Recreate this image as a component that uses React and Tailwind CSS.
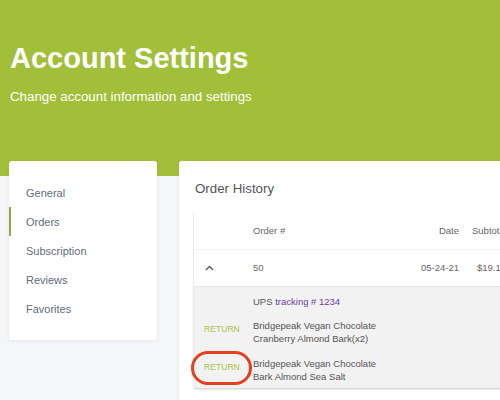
import React from 'react';

const menu = ['General', 'Orders', 'Subscription', 'Reviews', 'Favorites'];

const items = [
  { name: ['Bridgepeak Vegan Chocolate', 'Cranberry Almond Bark(x2)'], marked: false },
  { name: ['Bridgepeak Vegan Chocolate', 'Bark Almond Sea Salt'], marked: true }
];

const ChevronUp = () => (
  <svg width="9" height="6" viewBox="0 0 9 6" fill="none">
    <path d="M1 5 L4.5 1.5 L8 5" stroke="#555" strokeWidth="1.3" />
  </svg>
);

const App = () => {
  return (
    <div className="w-[500px] h-[400px] overflow-hidden bg-[#f5f6fa] font-['Liberation_Sans',Arial,sans-serif]">
      <div className="h-[176px] bg-[#a2bf39] px-[10px] pt-[41px]">
        <h1 className="text-[29px] leading-[34px] font-bold text-white">Account Settings</h1>
        <p className="mt-[14px] text-[13.3px] leading-[16px] text-white">
          Change account information and settings
        </p>
      </div>

      <div className="flex items-start -mt-[15px] pl-[9px] gap-[22px]">
        <div className="w-[148px] shrink-0 bg-white rounded-[3px] shadow-[0_1px_4px_rgba(40,50,80,0.08)] py-[17px]">
          {menu.map(item => (
            <div
              key={item}
              className={`h-[29px] flex items-center pl-[15px] pt-[1px] text-[11px] text-[#5f6b7a] border-l-2 ${
                item === 'Orders' ? 'border-[#8fa93c]' : 'border-transparent'
              }`}
            >
              {item}
            </div>
          ))}
        </div>

        <div className="w-[360px] shrink-0 h-[260px] bg-white rounded-[3px] shadow-[0_1px_4px_rgba(40,50,80,0.08)] pl-[15px] pt-[19px]">
          <h2 className="pl-[1px] text-[13.3px] leading-[18px] text-[#555]">Order History</h2>
          <div className="mt-[13px] w-[360px] bg-white shadow-[0_1px_2px_rgba(0,0,0,0.22)] text-[9.5px] text-[#666]">
            <div className="flex items-center h-[39px] pt-[2px] border-b border-[#f1f1f1]">
              <div className="w-[59px]" />
              <div className="w-[140px]">Order #</div>
              <div className="w-[66px] text-right">Date</div>
              <div className="pl-[13px]">Subtotal</div>
            </div>
            <div className="flex items-center h-[37px] border-b border-[#e6e6e6]">
              <div className="w-[59px] pl-[11px] flex items-center"><ChevronUp /></div>
              <div className="w-[140px]">50</div>
              <div className="w-[66px] text-right">05-24-21</div>
              <div className="pl-[18px]">$19.19</div>
            </div>
            <div className="bg-[#f2f2f2] pt-[8px] pb-[5px] text-[#555]">
              <div className="pl-[59px] leading-[13px]">
                UPS <span className="text-[#6b3fa0]">tracking # 1234</span>
              </div>
              {items.map((it, i) => (
                <div key={i} className="flex items-start mt-[11px]">
                  <div className="w-[59px] pl-[10px] pt-[3px]">
                    <span className="relative inline-block text-[8.6px] leading-[13px] text-[#a9c44a]">
                      RETURN
                      {it.marked && (
                        <span className="absolute -left-[13px] -right-[12px] -top-[10px] h-[34px] rounded-full border-[3px] border-[#e3401f]" />
                      )}
                    </span>
                  </div>
                  <div className="leading-[13.3px]">
                    {it.name.map(line => <div key={line}>{line}</div>)}
                  </div>
                </div>
              ))}
            </div>
          </div>
        </div>
      </div>
    </div>
  );
};

export default App;
